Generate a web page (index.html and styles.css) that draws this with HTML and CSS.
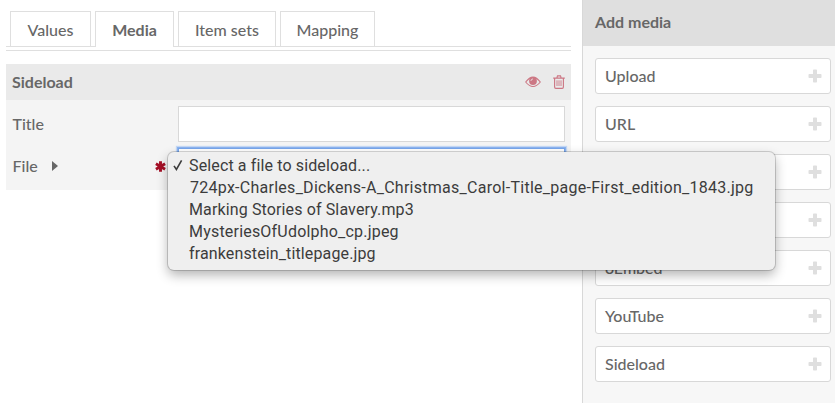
FILE: index.html
```html
<!DOCTYPE html>
<html lang="en">
<head>
<meta charset="utf-8">
<title>Media</title>
<link rel="stylesheet" href="styles.css">
</head>
<body>
<svg class="defs" aria-hidden="true">
  <symbol id="plus" viewBox="0 0 14 14"><path d="M5 1.3Q5 .5 5.8 .5H8.2Q9 .5 9 1.3V5H12.7Q13.5 5 13.5 5.8V8.2Q13.5 9 12.7 9H9V12.7Q9 13.5 8.2 13.5H5.8Q5 13.5 5 12.7V9H1.3Q.5 9 .5 8.2V5.8Q.5 5 1.3 5H5Z"/></symbol>
</svg>
<main class="content">
  <nav class="tabs">
    <a class="tab values">Values</a>
    <a class="tab media active">Media</a>
    <a class="tab sets">Item sets</a>
    <a class="tab mapping">Mapping</a>
  </nav>
  <section class="block">
    <header class="block-header">
      <h4>Sideload</h4>
      <span class="actions">
        <svg width="16" height="12" viewBox="0 0 16 12"><path d="M.7 6Q8-3.8 15.3 6Q8 15.1 .7 6Z" fill="none" stroke="currentColor" stroke-width="1.1"/><circle cx="8" cy="5" r="3.9" fill="currentColor"/><path d="M5.9 5Q6 3 8 2.9" fill="none" stroke="#eaeaea" stroke-width=".8"/></svg>
        <svg width="12" height="14" viewBox="0 0 12 14"><path d="M.2 3.1H11.8M3.9 2.9L4.5 .8H7.5L8.1 2.9M1.6 3.3V12Q1.6 13.4 2.8 13.4H9.2Q10.4 13.4 10.4 12V3.3" fill="none" stroke="currentColor" stroke-width="1.15"/><path d="M4 5.3V11M6 5.3V11M8 5.3V11" stroke="currentColor" stroke-width=".9"/></svg>
      </span>
    </header>
    <div class="field">
      <label>Title</label>
      <input type="text" class="control" aria-label="Title">
    </div>
    <div class="field file">
      <label>File</label>
      <svg class="caret" width="6" height="10" viewBox="0 0 6 10"><path d="M0 0L6 5L0 10Z"/></svg>
      <svg class="required" width="11" height="11" viewBox="0 0 12 12"><path d="M6 .3V11.7M1 3.1L11 8.9M11 3.1L1 8.9" stroke="currentColor" stroke-width="3.2"/></svg>
      <div class="control select">
        <ul class="menu">
          <li><svg class="check" width="10" height="12" viewBox="0 0 10 12"><path d="M1 6.9L3.4 10.4L8.6 1.3" fill="none" stroke="currentColor" stroke-width="1.6"/></svg><span>Select a file to sideload...</span></li>
          <li class="long"><span>724px-Charles_Dickens-A_Christmas_Carol-Title_page-First_edition_1843.jpg</span></li>
          <li><span>Marking Stories of Slavery.mp3</span></li>
          <li class="medium"><span>MysteriesOfUdolpho_cp.jpeg</span></li>
          <li><span>frankenstein_titlepage.jpg</span></li>
        </ul>
      </div>
    </div>
  </section>
</main>
<aside class="sidebar">
  <h3>Add media</h3>
  <div class="options">
    <button>Upload<svg><use href="#plus"/></svg></button>
    <button>URL<svg><use href="#plus"/></svg></button>
    <button><svg><use href="#plus"/></svg></button>
    <button><svg><use href="#plus"/></svg></button>
    <button>oEmbed<svg><use href="#plus"/></svg></button>
    <button>YouTube<svg><use href="#plus"/></svg></button>
    <button>Sideload<svg><use href="#plus"/></svg></button>
  </div>
</aside>
</body>
</html>
```
FILE: styles.css
```css
* { box-sizing: border-box; }
body {
  margin: 0;
  height: 403px;
  display: flex;
  overflow: hidden;
  background: #fff;
  color: #676767;
  font: 500 16px/24px Lato, sans-serif;
}
h3, h4 { margin: 0; font-size: 16px; font-weight: 700; }
.defs { display: none; }
.content { width: 582px; padding: 11px 11px 0 6px; }
.tabs {
  display: flex;
  gap: 4px;
  height: 40px;
  padding: 0 4px;
  border-bottom: 1px solid #dfdfdf;
  background: linear-gradient(#dfdfdf, #dfdfdf) 0 35px / 100% 1px no-repeat;
}
.tab {
  height: 35px;
  padding-top: 6px;
  border: 1px solid #dfdfdf;
  border-bottom: 0;
  text-align: center;
}
.values { width: 81px; }
.media { width: 79px; }
.sets { width: 98px; }
.mapping { width: 95px; }
.tab.active { height: 36px; background: #fff; font-weight: 700; }
.block { margin-top: 13px; height: 126px; background: #f4f4f4; }
.block-header {
  display: flex;
  align-items: center;
  justify-content: space-between;
  height: 36px;
  padding: 0 6px;
  background: #eaeaea;
}
.actions { display: flex; align-items: center; gap: 12px; color: #cc7784; }
.field { display: flex; align-items: center; height: 36px; margin-top: 6px; padding: 0 6px; }
.field label { padding-left: .5px; }
.control {
  width: 387px;
  height: 36px;
  margin-left: auto;
  border: 1px solid #d8d8d8;
  background: #fff;
}
.caret { margin-left: 14px; fill: #676767; }
.required { margin-left: auto; color: #a50f26; }
.required + .control { margin-left: 12px; }
.select {
  position: relative;
  border-color: #78a7ec;
  box-shadow: 0 0 0 1px #8cb4f0, 0 0 1px 2px #c4d8f5;
}
.menu {
  position: absolute;
  left: -11px;
  top: 3px;
  z-index: 2;
  width: 607px;
  height: 118px;
  margin: 0;
  padding: 3px 0;
  border-radius: 6px;
  background: #efefef;
  box-shadow: 0 0 0 1px rgba(0, 0, 0, .16), 0 5px 12px rgba(0, 0, 0, .3);
  color: #3c3c3c;
  font: 400 16px/22px Roboto, sans-serif;
  letter-spacing: .13px;
  list-style: none;
}
.menu li { height: 22px; padding-left: 21px; white-space: nowrap; }
.menu .medium { letter-spacing: .2px; }
.menu .long { padding-left: 22px; letter-spacing: .265px; }
.check { float: left; margin: 4px 0 0 -16px; }
.sidebar {
  width: 253px;
  border-left: 1px solid #d8d8d8;
  background: #f7f7f7;
}
.sidebar h3 { height: 46px; padding: 10px 12px; background: #dfdfdf; }
.options { display: grid; gap: 12px; padding: 12px 4px 0 12px; }
.options button {
  display: flex;
  align-items: center;
  height: 36px;
  padding: 0 8px 0 9px;
  border: 1px solid #d8d8d8;
  border-radius: 3px;
  background: #fff;
  color: inherit;
  font: inherit;
}
.options svg { width: 14px; height: 14px; margin-left: auto; fill: #dfdfdf; }
```
